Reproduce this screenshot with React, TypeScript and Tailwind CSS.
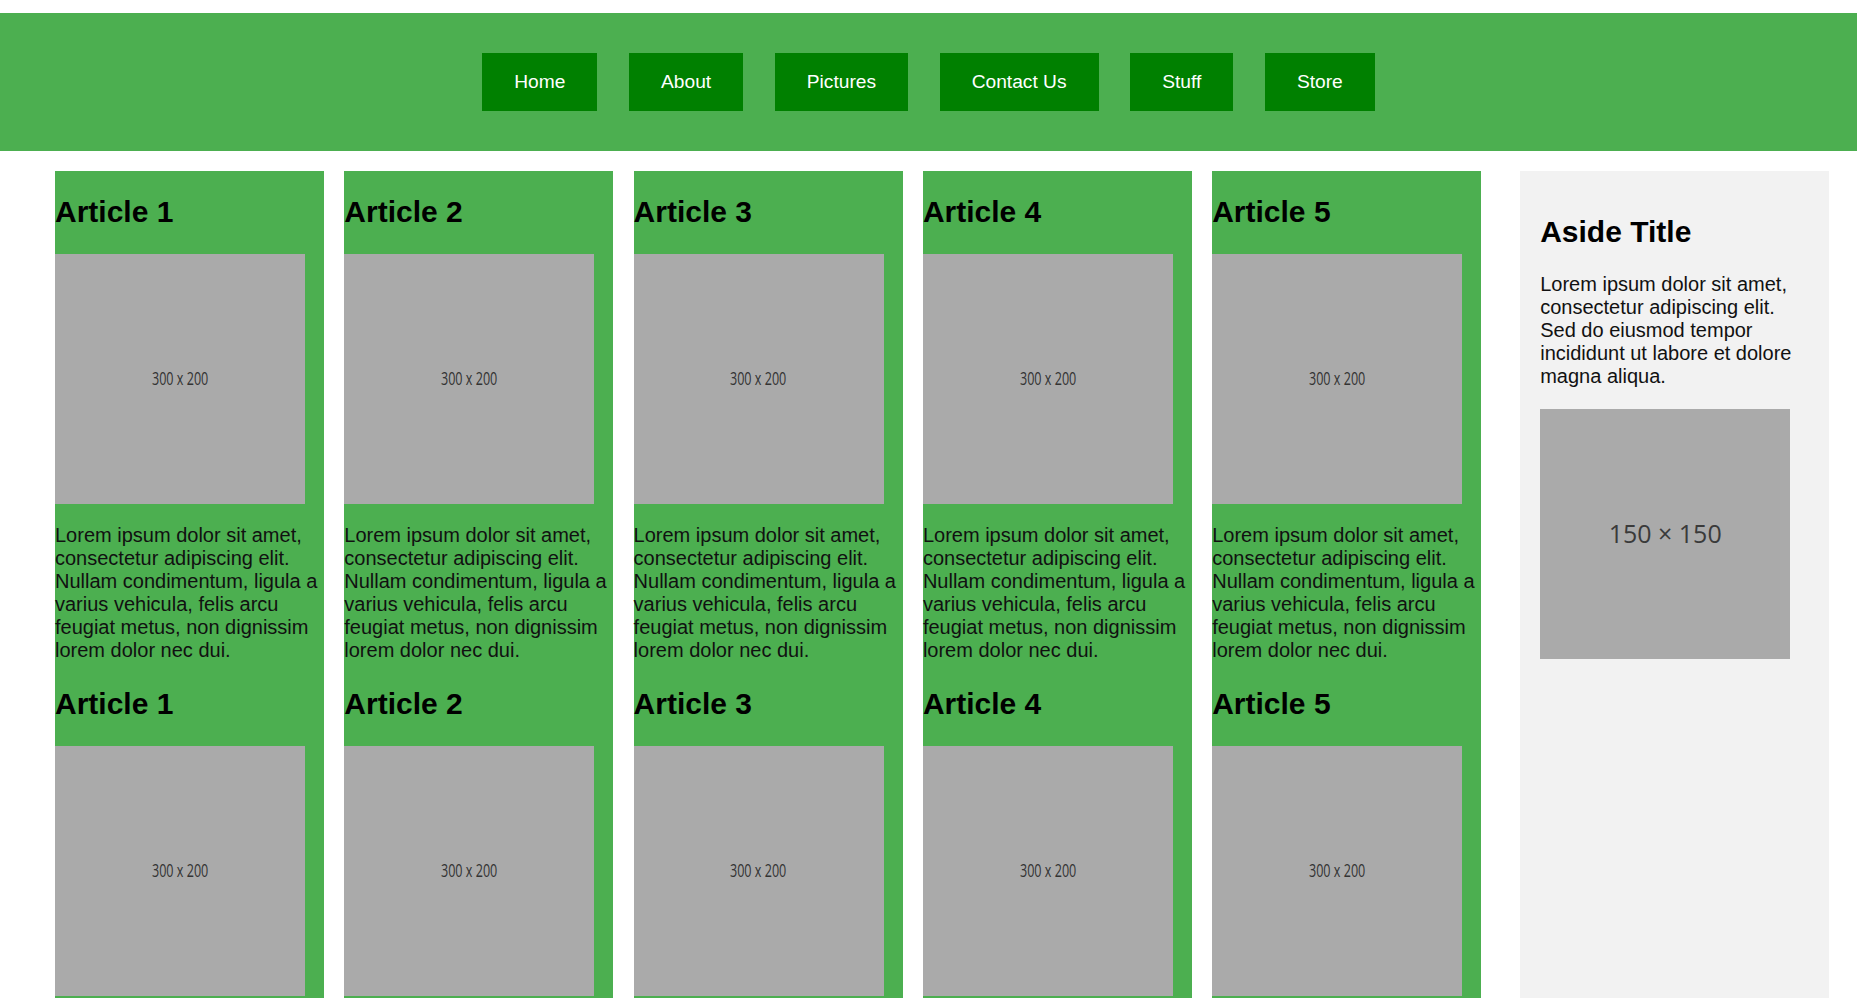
import React from "react";

const navItems = ["Home", "About", "Pictures", "Contact Us", "Stuff", "Store"];
const articleText =
  "Lorem ipsum dolor sit amet, consectetur adipiscing elit. Nullam condimentum, ligula a varius vehicula, felis arcu feugiat metus, non dignissim lorem dolor nec dui.";

function Placeholder300() {
  return (
    <div className="w-[250px] h-[250px] bg-[#aaaaaa] flex items-center justify-center shrink-0">
      <span className="font-['Open_Sans',sans-serif] text-[17.5px] leading-none text-[#333] scale-x-[0.72] whitespace-nowrap">
        300 x 200
      </span>
    </div>
  );
}

function ArticleBlock({ n }: { n: number }) {
  return (
    <>
      <h2 className="text-[30px] font-bold leading-[35px] mt-[23px] mb-[25px] text-black">
        Article {n}
      </h2>
      <Placeholder300 />
      <p className="text-[20px] leading-[23px] mt-[20px] mb-[1px] text-[#111]">{articleText}</p>
    </>
  );
}

export default function App() {
  return (
    <div className="font-['Liberation_Sans',Arial,sans-serif] bg-white min-h-screen pt-[13px]">
      <header className="h-[138px] bg-[#4caf50] flex items-center justify-center">
        <nav className="flex gap-[31.6px]">
          {navItems.map((item) => (
            <a
              key={item}
              className="bg-[#008000] text-white text-[19.2px] leading-[22px] px-8 py-[18px] whitespace-nowrap"
            >
              {item}
            </a>
          ))}
        </nav>
      </header>
      <main className="flex items-stretch pt-[20px] pl-[55px] pr-[27px]">
        <div className="flex gap-[20.3px]">
          {[1, 2, 3, 4, 5].map((n) => (
            <article key={n} className="w-[269px] bg-[#4caf50] flex flex-col">
              <ArticleBlock n={n} />
              <ArticleBlock n={n} />
            </article>
          ))}
        </div>
        <aside className="ml-[39px] w-[309px] bg-[#f2f2f2] px-[20px] pt-[43px]">
          <h2 className="text-[30px] font-bold leading-[35px] text-black">Aside Title</h2>
          <p className="text-[20px] leading-[23px] mt-[24px] text-[#111]">
            Lorem ipsum dolor sit amet, consectetur adipiscing elit. Sed do eiusmod tempor
            incididunt ut labore et dolore magna aliqua.
          </p>
          <div className="mt-[21px] w-[250px] h-[250px] bg-[#aaaaaa] flex items-center justify-center">
            <span className="font-['Open_Sans',sans-serif] text-[25px] text-[#3a3a3a]">150 × 150</span>
          </div>
        </aside>
      </main>
    </div>
  );
}
